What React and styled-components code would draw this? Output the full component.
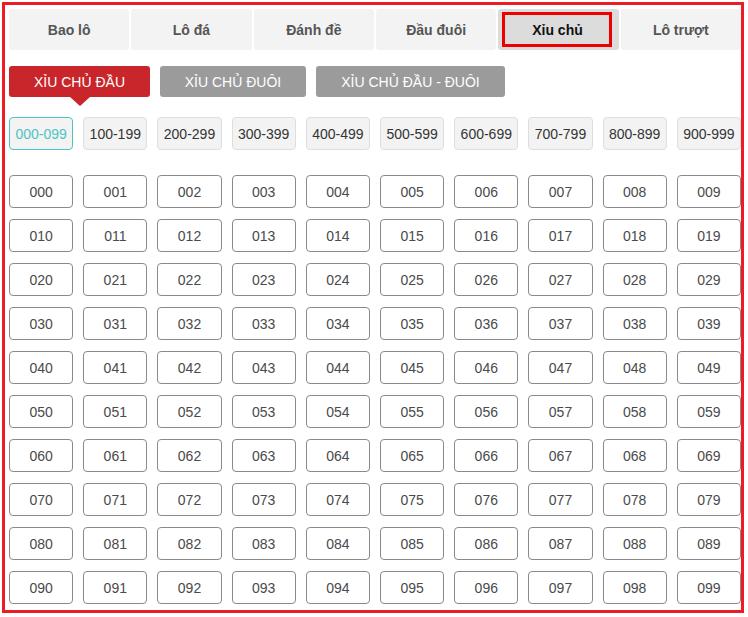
import React from "react";
import styled, { createGlobalStyle } from "styled-components";

const Global = createGlobalStyle`
  html, body { margin: 0; padding: 0; background: #fff; }
  body { font-family: Arial, "Liberation Sans", sans-serif; }
  * { box-sizing: border-box; }
`;

const Frame = styled.div`
  margin: 2px;
  width: 742px;
  height: 611px;
  border: 3px solid #ed1c24;
  padding: 4px 0 0 4px;
`;

const Inner = styled.div`
  width: 732px;
  position: relative;
`;

const Tabs = styled.div`
  display: flex;
  gap: 2px;
  height: 41px;
`;

const Tab = styled.div`
  flex: 1;
  display: flex;
  align-items: center;
  justify-content: center;
  border-radius: 3px;
  background: ${(p) => (p.$active ? "#dddcdc" : "#f3f3f3")};
  font-weight: bold;
  font-size: 14px;
  color: ${(p) => (p.$active ? "#111" : "#555")};
`;

const ActiveLabel = styled.span`
  display: flex;
  align-items: center;
  justify-content: center;
  width: 110px;
  height: 35px;
  margin-right: 2px;
  border: 3px solid #ee0000;
`;

const Modes = styled.div`
  display: flex;
  gap: 10px;
  margin-top: 16px;
  height: 31px;
`;

const ModeBtn = styled.div`
  position: relative;
  height: 31px;
  padding: 0 24px;
  display: flex;
  align-items: center;
  justify-content: center;
  border-radius: 3px;
  font-size: 14px;
  color: #fff;
  background: ${(p) => (p.$active ? "#c8262a" : "#9b9b9b")};
  width: ${(p) => p.$w}px;
  &::after {
    content: "";
    display: ${(p) => (p.$active ? "block" : "none")};
    position: absolute;
    left: 50%;
    bottom: -9px;
    margin-left: -10px;
    border-left: 10px solid transparent;
    border-right: 10px solid transparent;
    border-top: 9px solid #c8262a;
  }
`;

const Grid = styled.div`
  display: grid;
  grid-template-columns: repeat(10, 1fr);
  column-gap: 10px;
  row-gap: 11px;
  margin-top: ${(p) => p.$mt}px;
`;

const RangeBtn = styled.div`
  height: 33px;
  display: flex;
  align-items: center;
  justify-content: center;
  border-radius: 4px;
  background: #f3f3f3;
  border: 1px solid ${(p) => (p.$active ? "#4ec4c4" : "#dedede")};
  color: ${(p) => (p.$active ? "#4ec4c4" : "#333")};
  font-size: 14px;
`;

const NumBtn = styled.div`
  height: 33px;
  display: flex;
  align-items: center;
  justify-content: center;
  border-radius: 4px;
  background: #fff;
  border: 1px solid #8a8a8a;
  color: #4a4a4a;
  font-size: 14px;
`;

const tabs = ["Bao lô", "Lô đá", "Đánh đề", "Đầu đuôi", "Xỉu chủ", "Lô trượt"];
const modes = [
  { label: "XỈU CHỦ ĐẦU", w: 141 },
  { label: "XỈU CHỦ ĐUÔI", w: 146 },
  { label: "XỈU CHỦ ĐẦU - ĐUÔI", w: 189 },
];
const ranges = Array.from({ length: 10 }, (_, i) => {
  const a = String(i * 100).padStart(3, "0");
  const b = String(i * 100 + 99).padStart(3, "0");
  return `${a}-${b}`;
});
const nums = Array.from({ length: 100 }, (_, i) => String(i).padStart(3, "0"));

export default function App() {
  return (
    <>
      <Global />
      <Frame>
        <Inner>
          <Tabs>
            {tabs.map((t) =>
              t === "Xỉu chủ" ? (
                <Tab key={t} $active>
                  <ActiveLabel>{t}</ActiveLabel>
                </Tab>
              ) : (
                <Tab key={t}>{t}</Tab>
              )
            )}
          </Tabs>
          <Modes>
            {modes.map((m, i) => (
              <ModeBtn key={m.label} $active={i === 0} $w={m.w}>
                {m.label}
              </ModeBtn>
            ))}
          </Modes>
          <Grid $mt={20}>
            {ranges.map((r, i) => (
              <RangeBtn key={r} $active={i === 0}>
                {r}
              </RangeBtn>
            ))}
          </Grid>
          <Grid $mt={25}>
            {nums.map((n) => (
              <NumBtn key={n}>{n}</NumBtn>
            ))}
          </Grid>
        </Inner>
      </Frame>
    </>
  );
}
